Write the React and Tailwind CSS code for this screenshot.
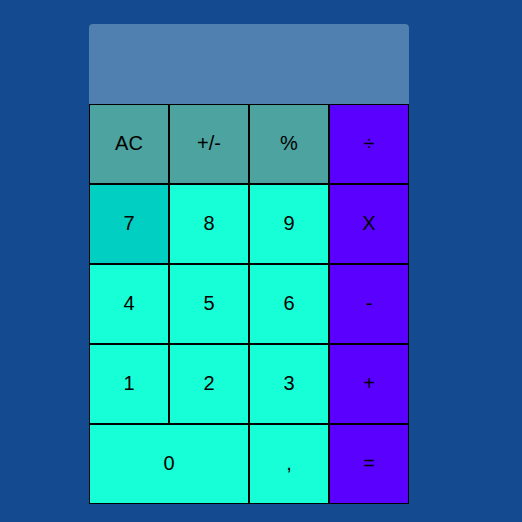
import React from 'react';

const rows = [
  [
    { label: 'AC', kind: 'fn' },
    { label: '+/-', kind: 'fn' },
    { label: '%', kind: 'fn' },
    { label: '÷', kind: 'op' },
  ],
  [
    { label: '7', kind: 'numActive' },
    { label: '8', kind: 'num' },
    { label: '9', kind: 'num' },
    { label: 'X', kind: 'op' },
  ],
  [
    { label: '4', kind: 'num' },
    { label: '5', kind: 'num' },
    { label: '6', kind: 'num' },
    { label: '-', kind: 'op' },
  ],
  [
    { label: '1', kind: 'num' },
    { label: '2', kind: 'num' },
    { label: '3', kind: 'num' },
    { label: '+', kind: 'op' },
  ],
  [
    { label: '0', kind: 'num', wide: true },
    { label: ',', kind: 'num' },
    { label: '=', kind: 'op' },
  ],
];

const colors = {
  fn: 'bg-[#4ca39f]',
  num: 'bg-[#17ffd6]',
  numActive: 'bg-[#00cfc1]',
  op: 'bg-[#5a00ff]',
};

export default function App() {
  return (
    <div className="min-h-screen bg-[#144a8f] pt-6 pl-[89px]" style={{ fontFamily: '"Liberation Sans", Arial, sans-serif' }}>
      <div className="w-[320px]">
        <div className="h-20 rounded-t-[4px] bg-[#5080b0]"></div>
        <div className="flex flex-wrap">
          {rows.flat().map((b) => (
            <button
              key={b.label}
              className={`${b.wide ? 'w-40' : 'w-20'} h-20 border border-black pb-0.5 text-[20px] text-black flex items-center justify-center ${colors[b.kind]}`}
            >
              {b.label}
            </button>
          ))}
        </div>
      </div>
    </div>
  );
}
